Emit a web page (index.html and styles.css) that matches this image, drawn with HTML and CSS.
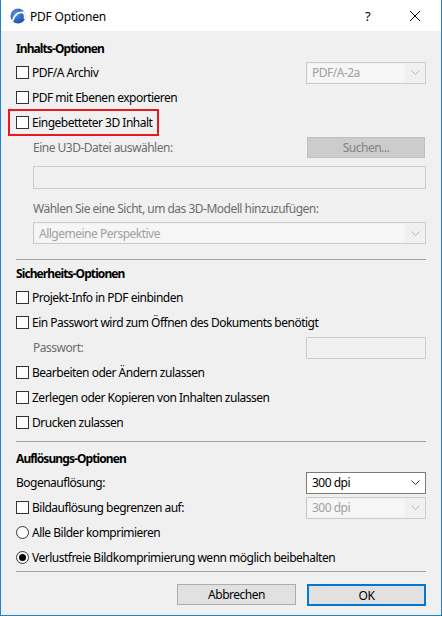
FILE: index.html
```html
<!DOCTYPE html>
<html lang="de">
<head>
<meta charset="utf-8">
<title>PDF Optionen</title>
<link rel="stylesheet" href="styles.css">
</head>
<body>
<div class="window">
  <div class="titlebar">
    <svg class="app-icon" width="16" height="16" viewBox="0 0 16 16">
      <defs>
        <radialGradient id="g" cx="35%" cy="35%" r="70%">
          <stop offset="0" stop-color="#5a8fe0"/>
          <stop offset="1" stop-color="#1d4fb3"/>
        </radialGradient>
      </defs>
      <circle cx="8" cy="8" r="7.5" fill="url(#g)"/>
      <path d="M2.5 13 C4 6.5 8.5 3.5 13.5 4.5 C14.5 6 15 8 14.5 10" fill="none" stroke="#fff" stroke-width="1.8" stroke-linecap="round"/>
    </svg>
    <span class="title">PDF Optionen</span>
    <span class="help">?</span>
    <svg class="close" width="12" height="12" viewBox="0 0 12 12">
      <path d="M1 1 L11 11 M11 1 L1 11" stroke="#000" stroke-width="1"/>
    </svg>
  </div>

  <div class="content">
    <div class="section-title first">Inhalts-Optionen</div>

    <div class="row">
      <label class="check"><span class="box"></span>PDF/A Archiv</label>
      <div class="select disabled"><span class="sel-text">PDF/A-2a</span><span class="arrow"><svg width="9" height="5" viewBox="0 0 9 5"><path d="M0.5 0.5 L4.5 4.5 L8.5 0.5" fill="none" stroke="currentColor"/></svg></span></div>
    </div>
    <div class="row">
      <label class="check"><span class="box"></span>PDF mit Ebenen exportieren</label>
    </div>
    <div class="row">
      <label class="check highlight"><span class="box"></span>Eingebetteter 3D Inhalt</label>
    </div>
    <div class="row">
      <span class="sub-label">Eine U3D-Datei auswählen:</span>
      <div class="btn disabled-btn">Suchen...</div>
    </div>
    <div class="wide-input"></div>
    <div class="row label-row">
      <span class="sub-label">Wählen Sie eine Sicht, um das 3D-Modell hinzuzufügen:</span>
    </div>
    <div class="select disabled wide"><span class="sel-text">Allgemeine Perspektive</span><span class="arrow"><svg width="9" height="5" viewBox="0 0 9 5"><path d="M0.5 0.5 L4.5 4.5 L8.5 0.5" fill="none" stroke="currentColor"/></svg></span></div>

    <div class="divider d1"></div>

    <div class="section-title">Sicherheits-Optionen</div>
    <div class="row">
      <label class="check"><span class="box"></span>Projekt-Info in PDF einbinden</label>
    </div>
    <div class="row">
      <label class="check"><span class="box"></span>Ein Passwort wird zum Öffnen des Dokuments benötigt</label>
    </div>
    <div class="row">
      <span class="sub-label">Passwort:</span>
      <div class="pw-input"></div>
    </div>
    <div class="row">
      <label class="check"><span class="box"></span>Bearbeiten oder Ändern zulassen</label>
    </div>
    <div class="row">
      <label class="check"><span class="box"></span>Zerlegen oder Kopieren von Inhalten zulassen</label>
    </div>
    <div class="row">
      <label class="check"><span class="box"></span>Drucken zulassen</label>
    </div>

    <div class="divider d2"></div>

    <div class="section-title">Auflösungs-Optionen</div>
    <div class="row">
      <span class="plain">Bogenauflösung:</span>
      <div class="select enabled"><span class="sel-text">300 dpi</span><span class="arrow"><svg width="9" height="5" viewBox="0 0 9 5"><path d="M0.5 0.5 L4.5 4.5 L8.5 0.5" fill="none" stroke="currentColor"/></svg></span></div>
    </div>
    <div class="row">
      <label class="check"><span class="box"></span>Bildauflösung begrenzen auf:</label>
      <div class="select disabled"><span class="sel-text">300 dpi</span><span class="arrow"><svg width="9" height="5" viewBox="0 0 9 5"><path d="M0.5 0.5 L4.5 4.5 L8.5 0.5" fill="none" stroke="currentColor"/></svg></span></div>
    </div>
    <div class="row">
      <label class="check"><span class="radio"></span>Alle Bilder komprimieren</label>
    </div>
    <div class="row">
      <label class="check"><span class="radio checked"></span>Verlustfreie Bildkomprimierung wenn möglich beibehalten</label>
    </div>

    <div class="divider d3"></div>

    <div class="buttons">
      <div class="btn normal">Abbrechen</div>
      <div class="btn default">OK</div>
    </div>
  </div>
</div>
</body>
</html>
```

FILE: styles.css
```css
* { box-sizing: border-box; }
html, body {
  margin: 0;
  padding: 0;
  background: #ffffff;
}
body {
  font-family: "Noto Sans", "Open Sans", sans-serif;
  font-size: 12px;
  letter-spacing: -0.5px;
  color: #000;
}
.window {
  width: 442px;
  height: 616px;
  border: 1px solid #1883d7;
  border-top: none;
  background: #f0f0f0;
  display: flex;
  flex-direction: column;
}
.titlebar {
  height: 31px;
  background: #fff;
  display: flex;
  align-items: center;
  padding-left: 9px;
  flex: none;
}
.app-icon { flex: none; margin-top: 1px; }
.title {
  margin-left: 4px;
  font-size: 12px;
  flex: 1;
  margin-top: 1px;
  letter-spacing: -0.2px;
}
.help {
  width: 14px;
  font-size: 13px;
  margin-right: 30px;
  margin-top: 1px;
}
.close { margin-right: 20px; margin-top: 1px; }

.content {
  padding: 0 15px;
  display: flex;
  flex-direction: column;
}
.section-title {
  font-weight: bold;
  letter-spacing: -0.9px;
  height: 24px;
  display: flex;
  align-items: center;
}
.section-title.first { margin-top: 5px; }
.row {
  height: 25px;
  display: flex;
  align-items: center;
  justify-content: space-between;
}
.check {
  display: flex;
  align-items: center;
  height: 20px;
  white-space: nowrap;
}
.box {
  width: 13px;
  height: 13px;
  border: 1px solid #333;
  background: #fff;
  margin-right: 3px;
  flex: none;
}
.radio {
  width: 13px;
  height: 13px;
  border: 1px solid #333;
  border-radius: 50%;
  background: #fff;
  margin-right: 3px;
  flex: none;
  display: flex;
  align-items: center;
  justify-content: center;
}
.radio.checked::after {
  content: "";
  width: 7px;
  height: 7px;
  border-radius: 50%;
  background: #000;
}
.highlight {
  outline: 2px solid #e8191f;
  outline-offset: 0;
  margin-left: -6px;
  padding: 0 5px 0 6px;
  height: 23px;
}
.sub-label {
  color: #6d6d6d;
  margin-left: 17px;
  white-space: nowrap;
}
.plain { white-space: nowrap; }

.select {
  width: 120px;
  height: 22px;
  border: 1px solid #ccc;
  display: flex;
  align-items: stretch;
  flex: none;
}
.select .sel-text {
  flex: 1;
  display: flex;
  align-items: center;
  padding-left: 5px;
}
.select .arrow {
  width: 20px;
  display: flex;
  align-items: center;
  justify-content: center;
}
.select.disabled { background: #f0f0f0; color: #a0a0a0; }
.select.disabled .sel-text { background: #f6f6f6; margin: 1px 0 1px 1px; padding-left: 4px; }
.select.disabled .arrow { color: #b8b8b8; }
.select.enabled {
  background: #fff;
  border-color: #7a7a7a;
  color: #000;
}
.select.enabled .arrow { color: #333; }
.select.wide {
  width: auto;
  margin-left: 17px;
  margin-top: 2px;
}

.btn {
  display: flex;
  align-items: center;
  justify-content: center;
  flex: none;
}
.disabled-btn {
  width: 118px;
  height: 21px;
  background: #cccccc;
  border: 1px solid #bfbfbf;
  color: #838383;
  margin-right: 1px;
}
.wide-input {
  height: 23px;
  margin-left: 17px;
  margin-top: 6px;
  border: 1px solid #cccccc;
  background: #f0f0f0;
}
.label-row { margin-top: 7px; height: 24px; }
.pw-input {
  width: 120px;
  height: 22px;
  border: 1px solid #cccccc;
  background: #f0f0f0;
}

.divider {
  height: 1px;
  background: #a0a0a0;
  flex: none;
}
.d1 { margin-top: 15px; margin-bottom: 1px; }
.d2 { margin-top: 6px; margin-bottom: 4px; }
.d3 { margin-top: 1px; }

.buttons {
  display: flex;
  justify-content: flex-end;
  gap: 11px;
  margin-top: 12px;
}
.btn.normal {
  width: 119px;
  height: 21px;
  background: #e1e1e1;
  border: 1px solid #adadad;
}
.btn.default {
  width: 119px;
  height: 22px;
  background: #e1e1e1;
  border: 2px solid #0078d7;
}
```
